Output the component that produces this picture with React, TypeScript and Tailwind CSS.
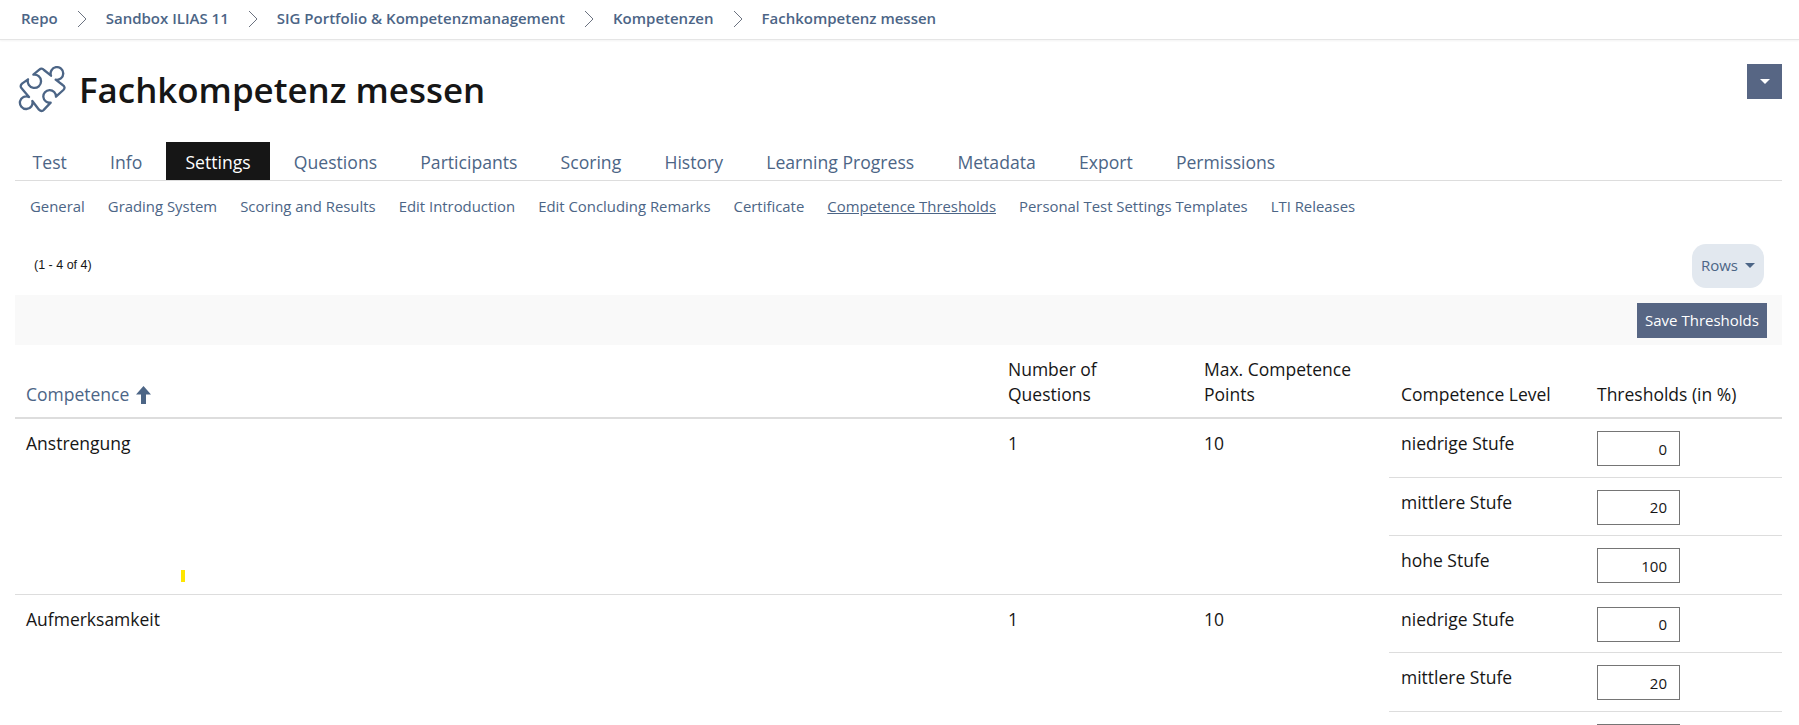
const Chevron = () => (
  <svg width="10" height="18" viewBox="0 0 10 18" fill="none" stroke="#6b7280" strokeWidth="1" className="ml-[19px] mr-[19px] shrink-0">
    <path d="M1 1 L9 9 L1 17" />
  </svg>
);

const Caret = ({ color }: { color: string }) => (
  <svg width="10" height="5" viewBox="0 0 10 5" fill={color}>
    <path d="M0 0 H10 L5 5 Z" />
  </svg>
);

const PuzzleIcon = () => (
  <svg width="49" height="47" viewBox="24 24 147 141" fill="none" stroke="#4c6586" strokeWidth="7" strokeLinejoin="round" strokeLinecap="round" className="shrink-0">
    <path d="M88 35 Q95 28 102 36 L123 53 A19 19 0 1 1 137 65 L158 81 Q168 88 160 96 L138 116 A19 19 0 1 0 122 134 L102 155 Q95 163 87 155 L67 129 A19 19 0 1 1 57 117 L36 92 Q28 85 36 77 L54 64 A20 20 0 1 0 70 50 Z" />
  </svg>
);

const tabs = ["Test", "Info", "Settings", "Questions", "Participants", "Scoring", "History", "Learning Progress", "Metadata", "Export", "Permissions"];
const subTabs = ["General", "Grading System", "Scoring and Results", "Edit Introduction", "Edit Concluding Remarks", "Certificate", "Competence Thresholds", "Personal Test Settings Templates", "LTI Releases"];
const crumbs = ["Repo", "Sandbox ILIAS 11", "SIG Portfolio & Kompetenzmanagement", "Kompetenzen", "Fachkompetenz messen"];
const levels = [
  { name: "niedrige Stufe", value: "0", rowClass: "h-[58.5px] border-b border-[#dddddd]" },
  { name: "mittlere Stufe", value: "20", rowClass: "h-[58.5px] border-b border-[#dddddd]" },
  { name: "hohe Stufe", value: "100", rowClass: "h-[57.5px]" },
];

const Row = ({ name }: { name: string }) => (
  <tr className="border-b border-[#dddddd] align-top">
    <td className="px-[11px] pt-[12px]">{name}</td>
    <td className="px-[11px] pt-[12px]">1</td>
    <td className="px-[11px] pt-[12px]">10</td>
    <td colSpan={2} className="p-0">
      {levels.map((l) => (
        <div key={l.name} className={`flex ${l.rowClass}`}>
          <div className="w-[196px] px-[12px] pt-[12px]">{l.name}</div>
          <div className="pt-[12px] pl-[12px]">
            <input
              readOnly
              value={l.value}
              className="block h-[35px] w-[83px] border border-[#757575] bg-white pr-[12px] text-right text-[15px] text-[#161616]"
            />
          </div>
        </div>
      ))}
    </td>
  </tr>
);

export default function App() {
  return (
    <div className="relative h-screen overflow-hidden bg-white text-[17.5px] leading-[25px] text-[#161616] font-['Open_Sans',sans-serif]">
      <nav className="flex h-[40px] items-center border-b border-[#e5e5e5] pb-[2px] pl-[21px] text-[15px] font-semibold text-[#4c6586] shadow-[0_1px_2px_rgba(0,0,0,0.05)]">
        {crumbs.map((c, i) => (
          <span key={c} className="flex items-center">
            {i > 0 && <Chevron />}
            <a>{c}</a>
          </span>
        ))}
      </nav>

      <div className="pl-[15px] pr-[17px]">
        <header className="flex h-[102px] items-start justify-between pt-[24px]">
          <div className="mt-[2px] flex items-center gap-[12px] pl-[3px]">
            <PuzzleIcon />
            <h1 className="text-[34.9px] leading-[44px] font-semibold text-[#161616]">Fachkompetenz messen</h1>
          </div>
          <button className="flex h-[35px] w-[35px] items-center justify-center bg-[#576684]">
            <Caret color="#ffffff" />
          </button>
        </header>

        <div className="flex h-[39px] border-b border-[#dddddd] text-[17.6px] text-[#4c6586]">
          <div className="-ml-[2px] flex">
            {tabs.map((t) => (
              <a
                key={t}
                className={`mr-[4px] flex h-[38px] items-center px-[19.6px] pt-[2px] ${t === "Settings" ? "bg-[#161616] text-white" : ""}`}
              >
                {t}
              </a>
            ))}
          </div>
        </div>

        <div className="flex h-[49px] items-center gap-[23px] pt-[2px] pl-[15px] text-[14.9px] text-[#4c6586]">
          {subTabs.map((t) => (
            <a key={t} className={t === "Competence Thresholds" ? "underline" : ""}>{t}</a>
          ))}
        </div>

        <div className="mt-[13px] flex h-[45px] items-center justify-between pr-[18px] pl-[19px]">
          <span className="font-['Liberation_Sans',sans-serif] text-[12.5px] text-[#161616]">(1 - 4 of 4)</span>
          <button className="flex h-[44px] w-[72px] items-center justify-center gap-[7px] rounded-[14px] bg-[#e2e8ef] text-[15px] text-[#4c6586]">
            Rows <Caret color="#4c6586" />
          </button>
        </div>

        <div className="mt-[7px] flex h-[50px] items-center justify-end bg-[#f9f9f9] pr-[15px]">
          <button className="h-[35px] w-[130px] bg-[#576684] text-[15px] text-white">Save Thresholds</button>
        </div>

        <table className="w-full table-fixed border-collapse">
          <colgroup>
            <col className="w-[982px]" />
            <col className="w-[196px]" />
            <col className="w-[196px]" />
            <col className="w-[196px]" />
            <col />
          </colgroup>
          <thead>
            <tr className="border-b-2 border-[#dddddd] text-left align-bottom">
              <th className="h-[73px] px-[11px] pb-[10px] font-normal text-[#4c6586]">
                <span className="inline-flex items-center gap-[7px]">
                  Competence
                  <svg width="15" height="18" viewBox="0 0 15 18" fill="#4c6586"><path d="M7.5 0 L15 8.5 H10 V18 H5 V8.5 H0 Z" /></svg>
                </span>
              </th>
              <th className="px-[11px] pb-[10px] font-normal">Number of<br />Questions</th>
              <th className="px-[11px] pb-[10px] font-normal">Max. Competence<br />Points</th>
              <th className="px-[12px] pb-[10px] font-normal">Competence Level</th>
              <th className="px-[12px] pb-[10px] font-normal">Thresholds (in %)</th>
            </tr>
          </thead>
          <tbody>
            <Row name="Anstrengung" />
            <Row name="Aufmerksamkeit" />
          </tbody>
        </table>
      </div>

      <div className="absolute top-[570px] left-[181px] h-[12px] w-[4px] bg-[#ffe600]" />
    </div>
  );
}
